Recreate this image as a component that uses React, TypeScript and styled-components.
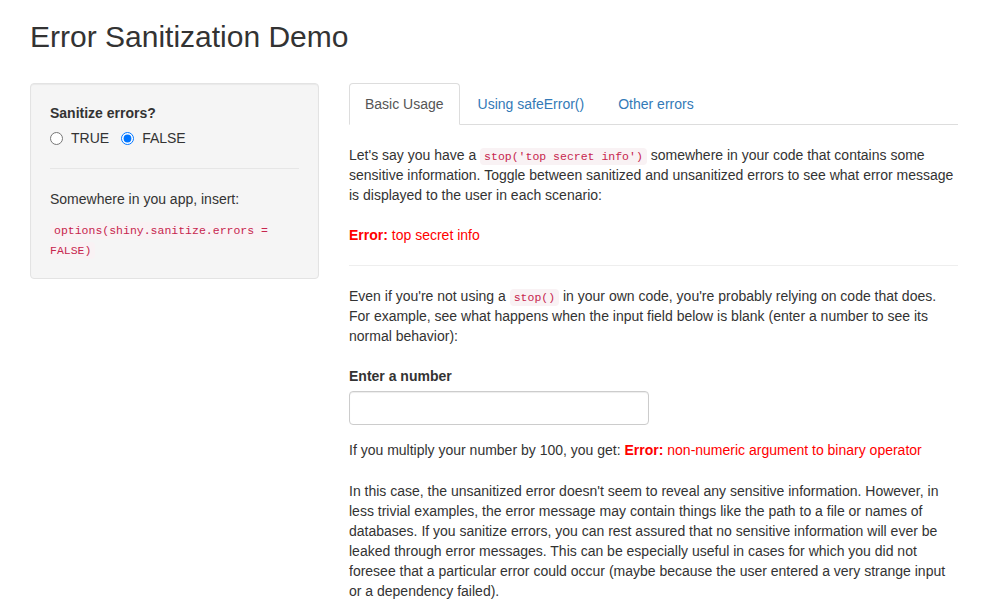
import { FC } from "react";
import styled, { createGlobalStyle } from "styled-components";

const GlobalStyle = createGlobalStyle`
  html, body {
    margin: 0;
    overflow: hidden;
  }
  body {
    background: #fff;
    color: #333;
    font-family: "Liberation Sans", Arial, sans-serif;
    font-size: 14px;
    line-height: 20px;
  }
  * {
    box-sizing: border-box;
  }
`;

const Page = styled.div`
  padding: 0 30px;
`;

const Title = styled.h2`
  margin: 20px 0 30px;
  font-size: 30px;
  font-weight: 500;
  line-height: 33px;
  color: #333;
`;

const Layout = styled.div`
  display: grid;
  grid-template-columns: 289px 1fr;
  gap: 30px;
  align-items: start;
`;

const Well = styled.div`
  background: #f5f5f5;
  border: 1px solid #e3e3e3;
  border-radius: 4px;
  box-shadow: inset 0 1px 1px rgba(0, 0, 0, 0.05);
  padding: 19px;
`;

const Label = styled.div`
  font-weight: bold;
  margin-bottom: 5px;
`;

const RadioRow = styled.div`
  display: flex;
  gap: 12px;
`;

const RadioLabel = styled.label`
  display: flex;
  align-items: center;
  gap: 8px;
  cursor: pointer;

  input {
    margin: 0;
    width: 13px;
    height: 13px;
  }
`;

const Rule = styled.hr<{ $tone?: string }>`
  border: 0;
  border-top: 1px solid ${(p) => p.$tone || "#eee"};
  margin: 20px 0;
`;

const Para = styled.p<{ $gap?: number }>`
  margin: 0 0 ${(p) => (p.$gap ?? 10)}px;
`;

const Code = styled.code`
  font-family: "Liberation Mono", "DejaVu Sans Mono", monospace;
  font-size: 11.5px;
  line-height: 1;
  color: #c7254e;
  background: #f9f2f4;
  padding: 2px 4px;
  border-radius: 4px;
`;

const Tabs = styled.ul`
  display: flex;
  list-style: none;
  margin: 0;
  padding: 0;
  border-bottom: 1px solid #ddd;
`;

const Tab = styled.li<{ $active?: boolean }>`
  margin: 0 2px -1px 0;
  padding: 10px 15px;
  line-height: 20px;
  border: 1px solid ${(p) => (p.$active ? "#ddd" : "transparent")};
  border-bottom-color: ${(p) => (p.$active ? "#fff" : "transparent")};
  border-radius: 4px 4px 0 0;
  background: ${(p) => (p.$active ? "#fff" : "transparent")};
  color: ${(p) => (p.$active ? "#555" : "#337ab7")};
  cursor: pointer;
`;

const Pane = styled.div`
  padding-top: 20px;
`;

const ErrorText = styled.span`
  color: red;

  b {
    font-weight: bold;
  }
`;

const ErrorLine = styled.div`
  margin-top: 20px;
`;

const Field = styled.div`
  margin: 20px 0 15px;
`;

const NumberInput = styled.input`
  display: block;
  width: 300px;
  height: 34px;
  padding: 6px 12px;
  font-size: 14px;
  font-family: inherit;
  color: #555;
  background: #fff;
  border: 1px solid #ccc;
  border-radius: 4px;
  box-shadow: inset 0 1px 1px rgba(0, 0, 0, 0.075);
`;

const App: FC = () => {
  return (
    <Page>
      <GlobalStyle />
      <Title>Error Sanitization Demo</Title>
      <Layout>
        <Well>
          <Label>Sanitize errors?</Label>
          <RadioRow>
            <RadioLabel>
              <input type="radio" name="sanitize" value="TRUE" />
              TRUE
            </RadioLabel>
            <RadioLabel>
              <input type="radio" name="sanitize" value="FALSE" defaultChecked />
              FALSE
            </RadioLabel>
          </RadioRow>
          <Rule $tone="#e6e6e6" />
          <Para>Somewhere in you app, insert:</Para>
          <div>
            <Code>options(shiny.sanitize.errors = FALSE)</Code>
          </div>
        </Well>

        <div>
          <Tabs>
            <Tab $active>Basic Usage</Tab>
            <Tab>Using safeError()</Tab>
            <Tab>Other errors</Tab>
          </Tabs>
          <Pane>
            <Para>
              Let's say you have a <Code>stop('top secret info')</Code> somewhere in
              your code that contains some sensitive information. Toggle between
              sanitized and unsanitized errors to see what error message is
              displayed to the user in each scenario:
            </Para>
            <ErrorLine>
              <ErrorText>
                <b>Error:</b> top secret info
              </ErrorText>
            </ErrorLine>
            <Rule />
            <Para>
              Even if you're not using a <Code>stop()</Code> in your own code,
              you're probably relying on code that does. For example, see what
              happens when the input field below is blank (enter a number to see
              its normal behavior):
            </Para>
            <Field>
              <Label>Enter a number</Label>
              <NumberInput type="number" />
            </Field>
            <Para $gap={21}>
              If you multiply your number by 100, you get:{" "}
              <ErrorText>
                <b>Error:</b> non-numeric argument to binary operator
              </ErrorText>
            </Para>
            <Para>
              In this case, the unsanitized error doesn't seem to reveal any
              sensitive information. However, in less trivial examples, the error
              message may contain things like the path to a file or names of
              databases. If you sanitize errors, you can rest assured that no
              sensitive information will ever be leaked through error messages.
              This can be especially useful in cases for which you did not foresee
              that a particular error could occur (maybe because the user entered
              a very strange input or a dependency failed).
            </Para>
          </Pane>
        </div>
      </Layout>
    </Page>
  );
};

export default App;
